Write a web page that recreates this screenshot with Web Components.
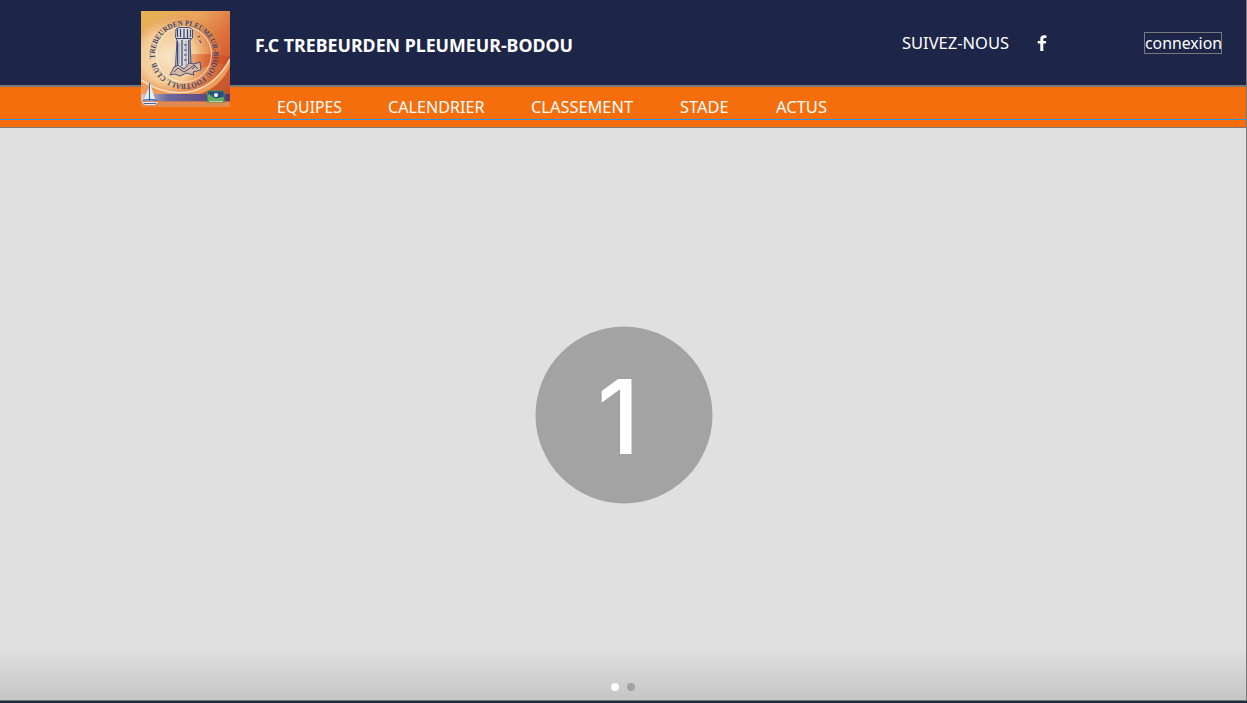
<!DOCTYPE html>
<html lang="fr">
<head>
<meta charset="utf-8">
<title>F.C Trebeurden Pleumeur-Bodou</title>
<style>
html,body{margin:0;height:100%;overflow:hidden;background:#1d2b40;font-family:"Noto Sans","Open Sans",sans-serif;color:#fff}
</style>
</head>
<body>
<fc-page></fc-page>
<script>
function define(name, html){
  const t=document.createElement('template');t.innerHTML=html;
  customElements.define(name,class extends HTMLElement{
    constructor(){super();this.attachShadow({mode:'open'}).append(t.content.cloneNode(true));}
  });
}
define('fc-logo',`<style>:host{display:block;width:89px;height:96px}svg{display:block}</style>
<svg width="89" height="96" viewBox="0 0 89 96">
<defs>
<linearGradient id="bg" x1="0" y1="0" x2="1" y2="1"><stop offset="0" stop-color="#e6b452"/><stop offset=".35" stop-color="#eaa45c"/><stop offset=".6" stop-color="#dc6c38"/><stop offset="1" stop-color="#c04a28"/></linearGradient>
<radialGradient id="glow" cx=".38" cy=".5" r=".62"><stop offset="0" stop-color="#f8e4c8"/><stop offset=".5" stop-color="#f3cb94"/><stop offset="1" stop-color="#e2813f" stop-opacity=".1"/></radialGradient>
<linearGradient id="dusk" x1="0" x2="1"><stop offset="0" stop-color="#e78a48" stop-opacity="0"/><stop offset=".6" stop-color="#d85a2c"/><stop offset="1" stop-color="#c74a28"/></linearGradient>
<linearGradient id="band" x1="0" x2="1"><stop offset="0" stop-color="#d8c4cc"/><stop offset=".3" stop-color="#6a69a0"/><stop offset="1" stop-color="#56396b"/></linearGradient>
<path id="ring" d="M14.2 47.5A29.2 29.2 0 1 1 14.3 48.2"/>
</defs>
<rect width="89" height="96" fill="url(#bg)"/>
<ellipse cx="38" cy="46" rx="44" ry="42" fill="url(#glow)"/>
<path d="M30 45Q55 41 89 45V54Q70 50 62 58Q46 50 30 52Z" fill="url(#dusk)" opacity=".75"/>
<path d="M0 70Q24 86 52 80Q76 73 89 49V55Q80 77 55 84H0Z" fill="#ee9a58"/>
<path d="M0 69Q24 86 52 80Q76 73 89 48" fill="none" stroke="#f6dcbc" stroke-width="1.6"/>
<path d="M0 83H89V90.5H0Z" fill="url(#band)"/>
<path d="M0 90.5H89V96H0Z" fill="#e28a50"/>
<circle cx="43" cy="43.5" r="27.5" fill="none" stroke="#fbeedd" stroke-width=".8"/>
<text font-family="Liberation Serif" font-size="7.8" font-weight="700" fill="#3d4470"><textPath href="#ring" textLength="179" lengthAdjust="spacingAndGlyphs">TREBEURDEN PLEUMEUR-BODOU FOOTBALL CLUB</textPath></text>
<path d="M35 18L38 16.5H48L51.5 18.5V27L49 29L50 54L46 58L34.5 56L36 29L34.5 26Z" fill="#dfd9d4" stroke="#33447c" stroke-width=".9"/>
<path d="M36.5 18V26M39.5 18V26M43 18V27M46.5 18V27M49.5 19V26" stroke="#33447c" stroke-width="1.2"/>
<path d="M35 27.5H50M36.5 30V55M41 29V55M47.8 29V54M43 34H46M43 39H46M43 44H46M43 49H46" fill="none" stroke="#33447c" stroke-width="1.2"/>
<path d="M38 32V53M45 30V55" stroke="#7c8099" stroke-width=".7"/>
<path d="M29 64L33 56L37 54L43 58L48 52L53 53L59 51L60 59L52 61L53 64L45 62L39 65L34 63Z" fill="#d8b8a0" stroke="#33447c" stroke-width=".9"/>
<path d="M33 61L37 57L43 61L48 58L53 54L57 58M51 58L55 55" fill="none" stroke="#33447c" stroke-width=".9"/>
<path d="M56.5 26L59 25.5M58.5 29L60 32" stroke="#33447c"/>
<path d="M9 72L14 88H9ZM7.5 77L3 88H8Z" fill="#e2edf8"/><path d="M8.5 72V90M2 89.5Q9 87 16 89.5" fill="none" stroke="#2969a8"/>
<path d="M1 91H17L14 94H4Z" fill="#e2edf8"/><path d="M3 92.5H15" stroke="#43659c"/>
<rect x="66" y="79.5" width="17.5" height="12" fill="#3c9458"/><path d="M67 80.5H82.5V86Q78 89 73 86.5Q69 82 67 83Z" fill="#264c86"/><path d="M67 83Q72 88 77 87T82.5 86V90H67Z" fill="#66ae5b"/><circle cx="75" cy="84" r="2" fill="#fff"/><path d="M68 90.5H82" stroke="#d7dfc5" stroke-width=".8"/>
</svg>`);
customElements.define('fc-text',class extends HTMLElement{
  connectedCallback(){
    const w=this.getAttribute('width'),s=this.getAttribute('size')||16.5,b=this.getAttribute('weight')||400;
    this.attachShadow({mode:'open'}).innerHTML=`<style>:host{display:block;width:${w}px;height:24px}svg{display:block;overflow:visible}text{font:${b} ${s}px "Noto Sans","Open Sans",sans-serif;fill:#fff}</style><svg width="${w}" height="24"><text y="18" textLength="${w}" lengthAdjust="spacingAndGlyphs">${this.getAttribute('label')}</text></svg>`;
  }
});
define('fc-header',`<style>
:host{display:flex;box-sizing:border-box;height:87px;border-bottom:2px solid #797979;border-right:1px solid #797979;background:#1d2548;padding:11px 24px 0 141px;align-items:flex-start}
fc-logo{position:relative;z-index:2;flex:none}
.title{margin:23px 0 0 25px}.follow{margin:20px 0 0 329px}.fb{margin:24px 0 0 28px}
.login{box-sizing:border-box;border:1px solid #797979;width:78px;height:22px;margin:21px 0 0 auto}
.login fc-text{margin:-2px 0 0 -.5px}
</style><fc-logo></fc-logo><fc-text class="title" width="318" size="17.6" weight="700" label="F.C TREBEURDEN PLEUMEUR-BODOU"></fc-text><fc-text class="follow" width="107" label="SUIVEZ-NOUS"></fc-text>
<svg class="fb" width="10" height="17" viewBox="0 0 10 17"><path d="M9.4 .4V3H7.7Q6.3 3 6.3 4.3V6H9.2L8.8 8.6H6.3V16H3.3V8.6H.7V6H3.3V4Q3.3 .3 7 .3Z" fill="#fff"/></svg><div class="login"><fc-text width="77" size="16.8" label="connexion"></fc-text></div>`);
define('fc-nav',`<style>
:host{display:block;box-sizing:border-box;height:41px;background:linear-gradient(#2e94dc,#2e94dc) 0 32px/100% 1px no-repeat #f56e0e;border-bottom:1px solid #797979;border-right:1px solid #797979}
nav{display:flex;padding:8px 0 0 277px}
</style><nav><fc-text width="65" label="EQUIPES"></fc-text><fc-text style="margin-left:46px" width="96.5" label="CALENDRIER"></fc-text><fc-text style="margin-left:46.5px" width="102" label="CLASSEMENT"></fc-text><fc-text style="margin-left:47px" width="48.5" label="STADE"></fc-text><fc-text style="margin-left:47.5px" width="51" label="ACTUS"></fc-text></nav>`);
define('fc-carousel',`<style>
:host{display:grid;box-sizing:border-box;height:573px;border-bottom:1px solid #797979;border-right:1px solid #797979;background:linear-gradient(#e0e0e0 0 520px,#c5c5c5 572px);grid-template-rows:198px 178px 1fr;justify-items:center}
.one{grid-row:2;margin-left:2px}.dots{grid-row:3;align-self:end;display:flex;gap:8px;margin-bottom:9px}
i{width:8px;height:8px;border-radius:50%;background:#fff}i+i{background:#a2a2a2}
</style><svg class="one" width="178" height="178"><circle cx="89" cy="89" r="88.5" fill="#a3a3a3"/><text x="62" y="128" font-family="Inter" font-size="103" font-weight="500" fill="#fff">1</text></svg><div class="dots"><i></i><i></i></div>`);
define('fc-page',`<style>:host{display:block;background:#1d2b40;height:703px}</style><fc-header></fc-header><fc-nav></fc-nav><fc-carousel></fc-carousel>`);
</script>
</body></html>
